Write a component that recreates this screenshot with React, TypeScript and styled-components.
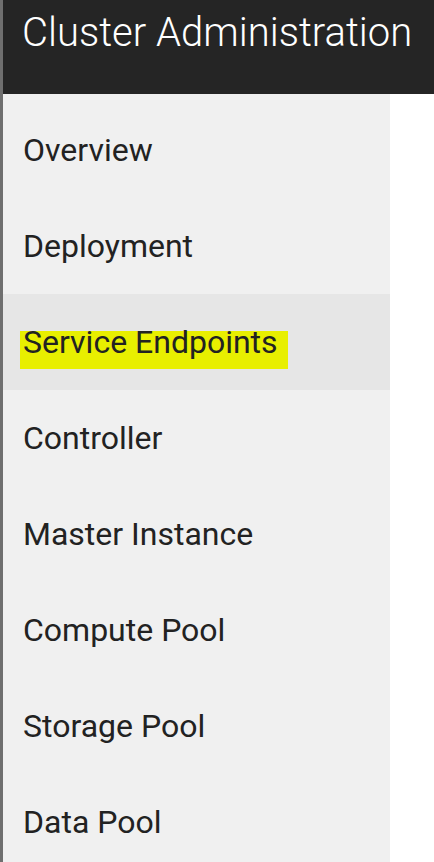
import styled, { createGlobalStyle } from 'styled-components'

const GlobalStyle = createGlobalStyle`
  html, body {
    margin: 0;
    padding: 0;
    background: #fff;
    font-family: Roboto, "Liberation Sans", sans-serif;
  }
`

const Page = styled.div`
  width: 434px;
  height: 862px;
  border-left: 3px solid #6f6f6f;
  box-sizing: border-box;
  overflow: hidden;
  display: flex;
  flex-direction: column;
`

const Header = styled.header`
  flex-shrink: 0;
  height: 94px;
  background: #252525;
  color: #fff;
  display: flex;
  align-items: flex-start;
  padding: 9px 0 0 19px;
  box-sizing: border-box;
  font-size: 40px;
  font-weight: 300;
  white-space: nowrap;
`

const Sidebar = styled.nav`
  flex-shrink: 0;
  width: 387px;
  background: #f0f0f0;
  padding-top: 8px;
  display: flex;
  flex-direction: column;
`

const Item = styled.div<{ $active?: boolean }>`
  flex-shrink: 0;
  height: 96px;
  display: flex;
  align-items: center;
  padding-left: 20px;
  background: ${p => (p.$active ? '#e6e6e6' : 'transparent')};
  color: #222;
  font-size: 32px;
  white-space: nowrap;
`

// highlighter stroke, sitting a little low like a hand-drawn marker
const Marker = styled.span`
  background: linear-gradient(transparent 8px, #e8ef00 8px);
  padding: 0 10px 8px 3px;
  margin: 0 0 -8px -3px;
`

const items = [
  'Overview',
  'Deployment',
  'Service Endpoints',
  'Controller',
  'Master Instance',
  'Compute Pool',
  'Storage Pool',
  'Data Pool',
]

export default function App() {
  return (
    <>
      <GlobalStyle />
      <Page>
        <Header>Cluster Administration</Header>
        <Sidebar>
          {items.map(name =>
            name === 'Service Endpoints' ? (
              <Item key={name} $active>
                <Marker>{name}</Marker>
              </Item>
            ) : (
              <Item key={name}>{name}</Item>
            )
          )}
        </Sidebar>
      </Page>
    </>
  )
}
